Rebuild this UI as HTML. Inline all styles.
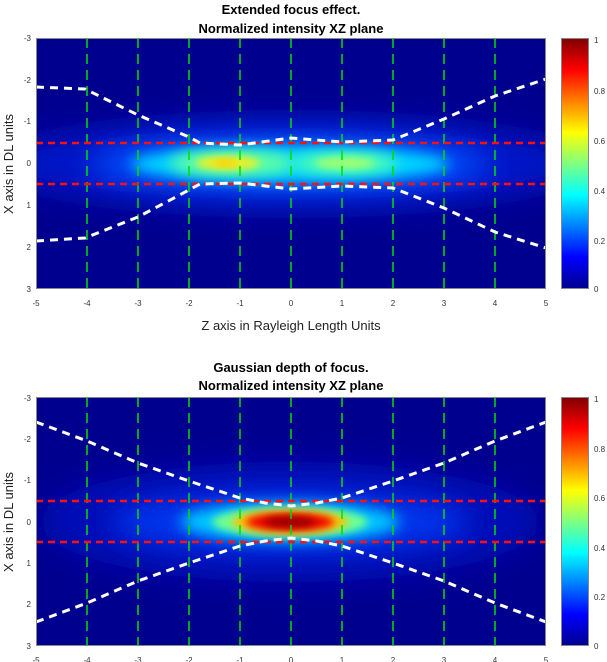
<!DOCTYPE html>
<html><head><meta charset="utf-8">
<style>
html,body{margin:0;padding:0;background:#fff;width:607px;height:662px;overflow:hidden}
svg text{font-family:"Liberation Sans",sans-serif}
</style></head><body>
<svg width="607" height="662" viewBox="0 0 607 662" xmlns="http://www.w3.org/2000/svg">
<defs>
<linearGradient id="jet" x1="0" y1="1" x2="0" y2="0">
<stop offset="0" stop-color="#00008f"/>
<stop offset="0.125" stop-color="#0000ff"/>
<stop offset="0.375" stop-color="#00ffff"/>
<stop offset="0.625" stop-color="#ffff00"/>
<stop offset="0.875" stop-color="#ff0000"/>
<stop offset="1" stop-color="#800000"/>
</linearGradient>
<filter id="b8" x="-50%" y="-50%" width="200%" height="200%"><feGaussianBlur stdDeviation="7"/></filter>
<filter id="b5" x="-50%" y="-50%" width="200%" height="200%"><feGaussianBlur stdDeviation="4"/></filter>
<filter id="b12" x="-50%" y="-50%" width="200%" height="200%"><feGaussianBlur stdDeviation="14"/></filter>
<clipPath id="c1"><rect x="36" y="38" width="510" height="251"/></clipPath>
<clipPath id="c2"><rect x="36" y="397" width="510" height="249"/></clipPath>
</defs>

<!-- TOP -->
<text x="291" y="14" font-size="13" font-weight="bold" text-anchor="middle">Extended focus effect.</text>
<text x="291" y="33" font-size="13" font-weight="bold" text-anchor="middle">Normalized intensity XZ plane</text>
<g clip-path="url(#c1)">
<rect x="36" y="38" width="510" height="251" fill="#00008f"/>
<ellipse cx="290" cy="164" rx="290" ry="45" fill="#0018c8" filter="url(#b12)"/>
<ellipse cx="290" cy="164" rx="200" ry="28" fill="#0050ff" filter="url(#b12)"/>
<ellipse cx="290" cy="164" rx="160" ry="18" fill="#00d8ff" filter="url(#b8)"/>
<ellipse cx="232" cy="163" rx="62" ry="13" fill="#60ffa0" filter="url(#b8)"/>
<ellipse cx="345" cy="163" rx="52" ry="11" fill="#50ffb0" filter="url(#b8)"/>
<ellipse cx="345" cy="163" rx="30" ry="6" fill="#a0ff70" filter="url(#b5)"/>
<ellipse cx="228" cy="163" rx="32" ry="7" fill="#f0f020" filter="url(#b5)"/>
<ellipse cx="225" cy="163" rx="12" ry="3" fill="#ffc800" filter="url(#b5)"/>
<g stroke="#00e000" stroke-width="1.5" stroke-dasharray="10,6">
<line x1="87" y1="38" x2="87" y2="289"/><line x1="138" y1="38" x2="138" y2="289"/><line x1="189" y1="38" x2="189" y2="289"/><line x1="240" y1="38" x2="240" y2="289"/><line x1="291" y1="38" x2="291" y2="289"/><line x1="342" y1="38" x2="342" y2="289"/><line x1="393" y1="38" x2="393" y2="289"/><line x1="444" y1="38" x2="444" y2="289"/><line x1="495" y1="38" x2="495" y2="289"/>
</g>
<g stroke="#ff1010" stroke-width="2.5" stroke-dasharray="7,5">
<line x1="36" y1="143" x2="546" y2="143"/><line x1="36" y1="184" x2="546" y2="184"/>
</g>
<g stroke="#fff" stroke-width="3" stroke-dasharray="8,6" fill="none">
<polyline points="36,87 85,89 138,115 189,137 200,143 240,145 291,138 342,142 393,140 444,119 495,96 546,79"/>
<polyline points="36,241 85,238 138,217 189,190 200,184 240,183 291,189 342,186 393,188 444,208 495,232 546,248"/>
</g>
</g>
<rect x="36.5" y="38.5" width="509" height="250" fill="none" stroke="#888" stroke-width="1"/>
<g font-size="8" fill="#333" text-anchor="end">
<text x="31" y="41">-3</text><text x="31" y="83">-2</text><text x="31" y="124">-1</text><text x="31" y="166">0</text><text x="31" y="208">1</text><text x="31" y="250">2</text><text x="31" y="292">3</text>
</g>
<g font-size="8" fill="#333" text-anchor="middle">
<text x="36" y="306">-5</text><text x="87" y="306">-4</text><text x="138" y="306">-3</text><text x="189" y="306">-2</text><text x="240" y="306">-1</text><text x="291" y="306">0</text><text x="342" y="306">1</text><text x="393" y="306">2</text><text x="444" y="306">3</text><text x="495" y="306">4</text><text x="546" y="306">5</text>
</g>
<text x="291" y="330" font-size="13" text-anchor="middle" fill="#222">Z axis in Rayleigh Length Units</text>
<text transform="translate(13,164) rotate(-90)" font-size="13" text-anchor="middle" fill="#222">X axis in DL units</text>
<rect x="561.5" y="38.5" width="27" height="250" fill="url(#jet)" stroke="#888"/>
<g font-size="8" fill="#333">
<text x="594" y="43">1</text><text x="594" y="94">0.8</text><text x="594" y="144">0.6</text><text x="594" y="194">0.4</text><text x="594" y="244">0.2</text><text x="594" y="292">0</text>
</g>

<!-- BOTTOM -->
<text x="291" y="372" font-size="13" font-weight="bold" text-anchor="middle">Gaussian depth of focus.</text>
<text x="291" y="390" font-size="13" font-weight="bold" text-anchor="middle">Normalized intensity XZ plane</text>
<g clip-path="url(#c2)">
<rect x="36" y="397" width="510" height="249" fill="#00008f"/>
<ellipse cx="290" cy="522" rx="250" ry="60" fill="#0010b8" filter="url(#b12)"/>
<ellipse cx="290" cy="522" rx="180" ry="30" fill="#0038f0" filter="url(#b12)"/>
<ellipse cx="290" cy="522" rx="110" ry="20" fill="#00c8ff" filter="url(#b8)"/>
<ellipse cx="290" cy="522" rx="78" ry="15" fill="#70ff90" filter="url(#b5)"/>
<ellipse cx="290" cy="522" rx="58" ry="12" fill="#ffc000" filter="url(#b5)"/>
<ellipse cx="290" cy="522" rx="44" ry="9" fill="#f00000" filter="url(#b5)"/>
<ellipse cx="290" cy="522" rx="26" ry="5" fill="#900000" filter="url(#b5)"/>
<g stroke="#00e000" stroke-width="1.5" stroke-dasharray="10,6">
<line x1="87" y1="397" x2="87" y2="646"/><line x1="138" y1="397" x2="138" y2="646"/><line x1="189" y1="397" x2="189" y2="646"/><line x1="240" y1="397" x2="240" y2="646"/><line x1="291" y1="397" x2="291" y2="646"/><line x1="342" y1="397" x2="342" y2="646"/><line x1="393" y1="397" x2="393" y2="646"/><line x1="444" y1="397" x2="444" y2="646"/><line x1="495" y1="397" x2="495" y2="646"/>
</g>
<g stroke="#ff1010" stroke-width="2.5" stroke-dasharray="7,5">
<line x1="36" y1="501" x2="546" y2="501"/><line x1="36" y1="542" x2="546" y2="542"/>
</g>
<g stroke="#fff" stroke-width="3" stroke-dasharray="8,6" fill="none">
<polyline points="36,422 87,441 138,463 189,481 240,498 265,503 291,506 317,503 342,498 393,481 444,463 495,441 546,422"/>
<polyline points="36,622 87,603 138,581 189,563 240,546 265,541 291,538 317,541 342,546 393,563 444,581 495,603 546,622"/>
</g>
</g>
<rect x="36.5" y="397.5" width="509" height="248" fill="none" stroke="#888" stroke-width="1"/>
<g font-size="8" fill="#333" text-anchor="end">
<text x="31" y="401">-3</text><text x="31" y="442">-2</text><text x="31" y="483">-1</text><text x="31" y="525">0</text><text x="31" y="566">1</text><text x="31" y="607">2</text><text x="31" y="649">3</text>
</g>
<g font-size="8" fill="#333" text-anchor="middle">
<text x="36" y="663">-5</text><text x="87" y="663">-4</text><text x="138" y="663">-3</text><text x="189" y="663">-2</text><text x="240" y="663">-1</text><text x="291" y="663">0</text><text x="342" y="663">1</text><text x="393" y="663">2</text><text x="444" y="663">3</text><text x="495" y="663">4</text><text x="546" y="663">5</text>
</g>
<text transform="translate(13,522) rotate(-90)" font-size="13" text-anchor="middle" fill="#222">X axis in DL units</text>
<rect x="561.5" y="397.5" width="27" height="248" fill="url(#jet)" stroke="#888"/>
<g font-size="8" fill="#333">
<text x="594" y="402">1</text><text x="594" y="452">0.8</text><text x="594" y="501">0.6</text><text x="594" y="551">0.4</text><text x="594" y="600">0.2</text><text x="594" y="649">0</text>
</g>
</svg>
</body></html>
